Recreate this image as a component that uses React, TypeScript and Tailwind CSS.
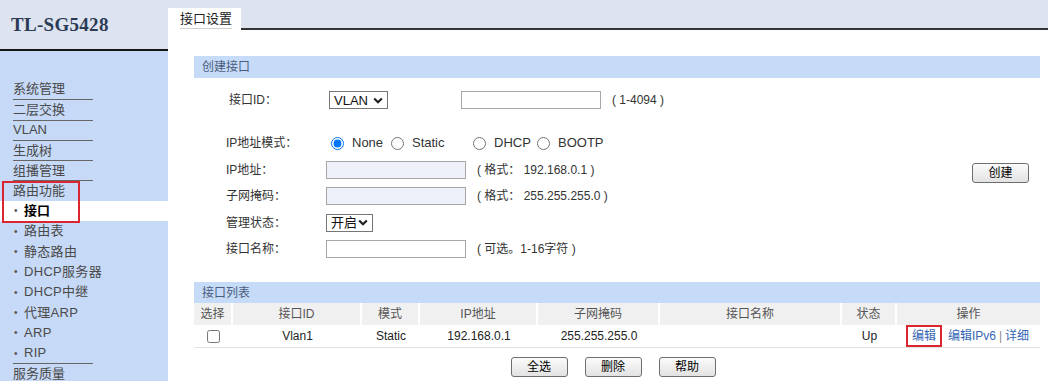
import React from 'react';

type NavItem = { label: string; sub?: boolean; active?: boolean; line?: boolean };

const before: NavItem[] = [
  { label: '系统管理' },
  { label: '二层交换', line: true },
  { label: 'VLAN', line: true },
  { label: '生成树', line: true },
  { label: '组播管理', line: true },
];

const boxed: NavItem[] = [
  { label: '路由功能', line: true },
  { label: '接口', sub: true, active: true },
];

const after: NavItem[] = [
  { label: '路由表', sub: true },
  { label: '静态路由', sub: true },
  { label: 'DHCP服务器', sub: true },
  { label: 'DHCP中继', sub: true },
  { label: '代理ARP', sub: true },
  { label: 'ARP', sub: true },
  { label: 'RIP', sub: true },
  { label: '服务质量', line: true },
];

const NavRow: React.FC<{ item: NavItem }> = ({ item }) => {
  if (item.sub) {
    return (
      <div className={`h-[20.3px] shrink-0 flex items-center ${item.active ? 'bg-white' : ''}`}>
        <span className="ml-[14px] w-[10px] text-[10px] text-[#555]">•</span>
        <span className={item.active ? 'font-bold text-black' : 'text-[#4a4a4a] tracking-[0.3px]'}>{item.label}</span>
      </div>
    );
  }
  return (
    <div className="h-[20.3px] shrink-0 flex">
      <div className={`ml-[13px] w-[80px] flex items-center text-[#4a4a4a] ${item.line ? 'border-t border-[#666]' : ''}`}>
        <span className="whitespace-nowrap leading-[16px]">{item.label}</span>
      </div>
    </div>
  );
};

const Chevron = () => (
  <svg width="10" height="7" viewBox="0 0 10 7" className="shrink-0">
    <polyline points="1.2,1.5 5,5.2 8.8,1.5" fill="none" stroke="#222" strokeWidth="2.2" />
  </svg>
);

const FakeSelect: React.FC<{ text: string; width: string }> = ({ text, width }) => (
  <div className={`${width} h-[18px] border border-[#767676] bg-white flex items-center justify-between pl-[4px] pr-[4px]`}>
    <span className="text-[13px] leading-none text-[#111]">{text}</span>
    <Chevron />
  </div>
);

const Radio: React.FC<{ label: string; checked?: boolean; width: string }> = ({ label, checked, width }) => (
  <label className={`${width} flex items-center`}>
    <input type="radio" name="ipmode" defaultChecked={checked} className="m-0 ml-[5px] w-[13px] h-[13px]" />
    <span className="ml-[8px] text-[13px]">{label}</span>
  </label>
);

const FormRow: React.FC<{ label: string; children: React.ReactNode }> = ({ label, children }) => (
  <div className="h-[26.3px] flex items-center pl-[32px]">
    <span className="w-[100px]">{label}</span>
    {children}
  </div>
);

const Hint: React.FC<{ children: React.ReactNode }> = ({ children }) => (
  <span className="ml-[11px] whitespace-pre">{children}</span>
);

const cols = [
  { label: '选择', w: 'w-[39px]' },
  { label: '接口ID', w: 'w-[129px]' },
  { label: '模式', w: 'w-[58px]' },
  { label: 'IP地址', w: 'w-[118px]' },
  { label: '子网掩码', w: 'w-[122px]' },
  { label: '接口名称', w: 'w-[182px]' },
  { label: '状态', w: 'w-[55px]' },
  { label: '操作', w: 'flex-1' },
];

const Btn: React.FC<{ children: React.ReactNode; className?: string }> = ({ children, className = '' }) => (
  <button className={`w-[57px] h-[20px] border border-[#6e6e6e] rounded-[3px] bg-gradient-to-b from-[#fbfbfb] to-[#e2e2e2] text-[12px] text-black leading-none ${className}`}>
    {children}
  </button>
);

export default function App() {
  return (
    <div className="w-[1048px] h-[381px] overflow-hidden flex bg-white font-['Liberation_Sans','Noto_Sans_CJK_SC',sans-serif]">
      {/* Sidebar */}
      <aside className="w-[168px] shrink-0 flex flex-col overflow-hidden">
        <div className="h-[51px] shrink-0 bg-[#dde3ef] border-b-2 border-[#151515] flex items-center pl-[11px] pt-[2px]">
          <span className="font-['Liberation_Serif',serif] font-bold text-[19px] text-[#2b3a55] tracking-[0.3px]">TL-SG5428</span>
        </div>
        <nav className="flex-1 bg-[#c6d9f6] pt-[28px] text-[13px]">
          {before.map((it) => <NavRow key={it.label} item={it} />)}
          <div className="relative">
            {boxed.map((it) => <NavRow key={it.label} item={it} />)}
            <div className="absolute left-[2px] top-[1px] w-[78px] h-[42px] border-2 border-[#d9262f] pointer-events-none" />
          </div>
          {after.map((it) => <NavRow key={it.label} item={it} />)}
        </nav>
      </aside>

      {/* Main */}
      <main className="flex-1 flex flex-col text-[12px] text-[#333]">
        <div className="h-[30px] shrink-0 bg-[#dde3ef] flex items-end">
          <div className="w-[73px] h-[22px] bg-white flex items-center pl-[12px]">
            <span className="text-[13px] text-[#222] border-b border-[#d0d0d0] leading-[18px]">接口设置</span>
          </div>
          <div className="flex-1 border-b-2 border-[#333]" />
        </div>

        <div className="pl-[26px] pr-[8px] pt-[26px]">
          {/* 创建接口 */}
          <div className="h-[22px] bg-[#c6dbf8] flex items-center pl-[8px] text-[#4a5d7c]">创建接口</div>

          <div className="flex">
            <div className="flex-1">
              <div className="h-[18px] mt-[13px] flex items-center pl-[35px]">
                <span className="w-[100px]">接口ID：</span>
                <FakeSelect text="VLAN" width="w-[59px]" />
                <input className="ml-[73px] w-[140px] h-[18px] border border-[#a7a7a7] bg-white" />
                <Hint>( 1-4094 )</Hint>
              </div>

              <div className="h-[26px] mt-[21px] flex items-center pl-[32px]">
                <span className="w-[100px]">IP地址模式：</span>
                <Radio label="None" checked width="w-[60px]" />
                <Radio label="Static" width="w-[82px]" />
                <Radio label="DHCP" width="w-[64px]" />
                <Radio label="BOOTP" width="w-[80px]" />
              </div>

              <div className="mt-[1px]">
                <FormRow label="IP地址：">
                  <input disabled className="w-[140px] h-[18px] border border-[#a7a7a7] bg-[#eef1f9]" />
                  <Hint>( 格式： 192.168.0.1 )</Hint>
                </FormRow>
                <FormRow label="子网掩码：">
                  <input disabled className="w-[140px] h-[18px] border border-[#a7a7a7] bg-[#eef1f9]" />
                  <Hint>( 格式： 255.255.255.0 )</Hint>
                </FormRow>
                <FormRow label="管理状态：">
                  <FakeSelect text="开启" width="w-[47px]" />
                </FormRow>
                <FormRow label="接口名称：">
                  <input className="w-[140px] h-[18px] border border-[#a7a7a7] bg-white" />
                  <Hint>( 可选。1-16字符 )</Hint>
                </FormRow>
              </div>
            </div>
            <Btn className="mt-[85px] mr-[11px] self-start">创建</Btn>
          </div>

          {/* 接口列表 */}
          <div className="mt-[20px] h-[21px] bg-[#c6dbf8] flex items-center pl-[8px] text-[#4a5d7c]">接口列表</div>
          <div className="flex h-[22px] bg-[#f0f0f0] text-[#555]">
            {cols.map((c, i) => (
              <div
                key={c.label}
                className={`${c.w} flex items-center justify-center ${i < cols.length - 1 ? 'border-r-2 border-white' : ''}`}
              >
                {c.label}
              </div>
            ))}
          </div>
          <div className="flex h-[23px] border-b border-[#e3e3e3] text-[#222]">
            <div className="w-[39px] flex items-center justify-center">
              <input type="checkbox" className="w-[13px] h-[13px] m-0" />
            </div>
            <div className="w-[129px] flex items-center justify-center">Vlan1</div>
            <div className="w-[58px] flex items-center justify-center">Static</div>
            <div className="w-[118px] flex items-center justify-center">192.168.0.1</div>
            <div className="w-[122px] flex items-center justify-center">255.255.255.0</div>
            <div className="w-[182px]" />
            <div className="w-[55px] flex items-center justify-center">Up</div>
            <div className="flex-1 flex items-center justify-center text-[#3566b3] pr-[2px]">
              <span className="inline-flex items-center h-[22px] px-[4px] border-2 border-[#d9262f]">编辑</span>
              <span className="ml-[6px]">编辑IPv6</span>
              <span className="mx-[3px] text-[#8a8a8a]">|</span>
              <span>详细</span>
            </div>
          </div>

          <div className="mt-[9px] flex justify-center gap-[17px] pr-[8px]">
            <Btn>全选</Btn>
            <Btn>删除</Btn>
            <Btn>帮助</Btn>
          </div>
        </div>
      </main>
    </div>
  );
}
